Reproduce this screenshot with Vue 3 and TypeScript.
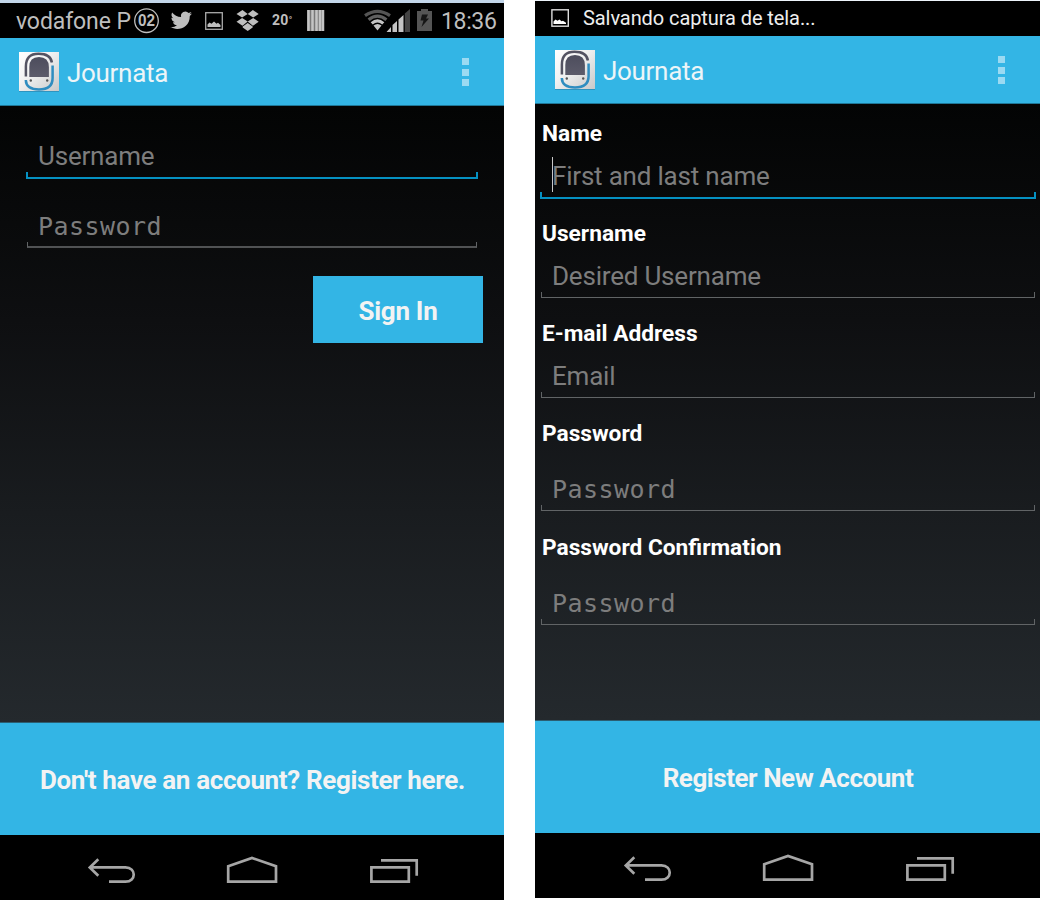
<script setup lang="ts">
interface Field {
  label?: string
  hint: string
  mono?: boolean
  focused?: boolean
  caret?: boolean
  cls: string
}

interface Screen {
  id: 'signin' | 'register'
  fields: Field[]
  action: string
}

const screens: Screen[] = [
  {
    id: 'signin',
    fields: [
      { hint: 'Username', focused: true, cls: 'h-user' },
      { hint: 'Password', mono: true, cls: 'h-pass' },
    ],
    action: "Don't have an account? Register here.",
  },
  {
    id: 'register',
    fields: [
      { label: 'Name', hint: 'First and last name', focused: true, caret: true, cls: 'h-name' },
      { label: 'Username', hint: 'Desired Username', cls: 'h-desired' },
      { label: 'E-mail Address', hint: 'Email', cls: 'h-email' },
      { label: 'Password', hint: 'Password', mono: true, cls: 'spaced' },
      { label: 'Password Confirmation', hint: 'Password', mono: true, cls: 'spaced' },
    ],
    action: 'Register New Account',
  },
]
</script>

<template>
  <main class="stage">
    <section v-for="s in screens" :key="s.id" class="phone" :class="s.id">
      <header v-if="s.id === 'signin'" class="status">
        <span class="carrier">vodafone P</span>
        <svg class="badge" width="26" height="35" viewBox="133 3 26 35">
          <circle cx="146.5" cy="20.7" r="11.8" fill="none" stroke="#bebebe" stroke-width="1.3" />
          <text x="146.5" y="26.4" text-anchor="middle" textLength="17" lengthAdjust="spacingAndGlyphs" class="badge-text">02</text>
        </svg>
        <svg class="bird" width="24" height="35" viewBox="169 3 24 35">
          <path fill="#bebebe" d="M192 13.6c-.8.4-1.600.6-2.500.7.9-.5 1.500-1.300 1.900-2.300-.9.5-1.800.8-2.800 1a4.400 4.400 0 0 0-7.500 4c-3.700-.2-6.900-1.900-9-4.600-1.200 2.100-.6 4.600 1.300 5.900-.7 0-1.400-.2-2-.5 0 2.200 1.500 4 3.500 4.400-.6.2-1.300.2-2 .1.600 1.700 2.200 3 4.100 3-1.900 1.400-4.100 2-6.500 1.800 6.800 4.200 19.500 1.200 19.300-11.200.9-.6 1.600-1.400 2.200-2.300z" />
        </svg>
        <svg class="photo" width="18" height="35" viewBox="205 3 18 35">
          <rect x="205.700" y="12.700" width="16.600" height="16.600" fill="none" stroke="#aaa" stroke-width="1.300" />
          <path d="M207.500 27v-2.500l2-2 2 1.200 2.500-2.200 2.500 2.200 1.500-1 2.500 2.300v2z" fill="#bebebe" />
        </svg>
        <svg class="boxes" width="24" height="35" viewBox="236 3 24 35">
          <path fill="#bebebe" d="M242.500 10l5.200 4-5.600 3.600-5.600-3.600zM252.900 10l5.800 4-5.500 3.600-5.500-3.600zM242.100 18l5.600 3.600-5.200 4.200-6-4zM253.200 18l5.500 3.800-5.800 4-5.200-4.200zM247.700 23l5 3.600v.9l-5 3.500-5-3.500v-.9z" />
        </svg>
        <span class="temp">20<i>°</i></span>
        <svg class="barcode" width="18" height="35" viewBox="307 3 18 35">
          <rect x="307" y="10" width="17" height="21" fill="#777" />
          <path d="M308.500 10v21M312.500 10v21M316.500 10v21M320 10v21M323 10v21" stroke="#c4c4c4" stroke-width="2.500" />
        </svg>
        <svg class="radio" width="70" height="35" viewBox="363 3 70 35">
          <g fill="none" stroke-width="3.200">
            <path d="M365 15.600Q377.500 7 390 15.600" stroke="#555" />
            <path d="M368.600 19.800Q377.500 12.500 386.400 19.800" stroke="#606060" />
            <path d="M371.700 23.400Q377.500 18.500 383.300 23.400" stroke="#c4c4c4" />
          </g>
          <path d="M373.500 25.600Q377.500 22.500 381.500 25.600L377.500 30.400z" fill="#c4c4c4" />
          <path d="M386.500 32l4.500-5v5zM392.500 32v-7l4.500-4v11zM398.500 32V19.500l5-4.500v17z" fill="#c4c4c4" />
          <path d="M404.800 32V13.500l5.200-4.500v23z" fill="#444" />
          <path d="M417 11h4V9h7v2h4v20h-15z" fill="#555" />
          <path d="M422 14.500h6l-2 4h3l-7.500 8.500 2-6.500h-3z" fill="#161616" />
        </svg>
        <span class="clock">18:36</span>
      </header>
      <header v-else class="status">
        <svg class="photo" width="18" height="35" viewBox="551 1 18 35">
          <rect x="551.900" y="9.800" width="16.400" height="16.400" fill="none" stroke="#ddd" stroke-width="1.400" />
          <path d="M553.500 24v-2.500l2-2 2 1.200 2-1.200 2 1.700 1.500-.5 3 2v1.300z" fill="#fff" />
        </svg>
        <span class="ticker">Salvando captura de tela...</span>
      </header>

      <div class="bar">
        <svg class="logo" width="42" height="42" viewBox="0 0 42 42">
          <defs>
            <linearGradient :id="'tile-' + s.id" x1="0" y1="0" x2="1" y2="1">
              <stop offset="0" stop-color="#fff" />
              <stop offset=".4" stop-color="#f3f3f3" />
              <stop offset="1" stop-color="#c9c9c9" />
            </linearGradient>
            <linearGradient :id="'cab-' + s.id" x1="0" y1="0" x2="0" y2="1">
              <stop offset="0" stop-color="#4d4d5d" />
              <stop offset="1" stop-color="#5c5b6a" />
            </linearGradient>
          </defs>
          <rect x="1" y="1.500" width="40" height="39.500" fill="#2b7fa5" opacity=".6" />
          <rect x="1" y="1" width="40" height="39" :fill="`url(#tile-${s.id})`" />
          <path d="M11.300 26V16Q11.300 6 21 6T30.900 16V26z" :fill="`url(#cab-${s.id})`" />
          <path d="M7.900 25.500V15.500C7.900 7 12 2.800 20.500 2.800C28.500 2.800 33 5.500 33.900 11.500" fill="none" stroke="#545362" stroke-width="2.500" />
          <path d="M34.600 14.500V27C34.600 35 30 38.500 21 38.500C12 38.500 8 35 7.800 29" fill="none" stroke="#2f8dc0" stroke-width="2.500" />
          <circle cx="12.800" cy="29.500" r="1.200" fill="#555" />
          <circle cx="29.200" cy="29.500" r="1.200" fill="#555" />
        </svg>
        <h1 class="title">Journata</h1>
        <div class="overflow"><b></b><b></b><b></b></div>
      </div>

      <form class="content" @submit.prevent>
        <div v-for="(f, i) in s.fields" :key="i" class="field" :class="[f.cls, { focused: f.focused }]">
          <label v-if="f.label" class="label">{{ f.label }}</label>
          <div class="hint" :class="{ mono: f.mono }">
            <i v-if="f.caret" class="caret"></i><span>{{ f.hint }}</span>
          </div>
          <div class="bracket"></div>
        </div>
        <button v-if="s.id === 'signin'" class="submit" type="button">Sign In</button>
      </form>

      <button class="action" type="button">{{ s.action }}</button>

      <nav class="nav">
        <svg width="504" height="65" viewBox="0 835 504 65" fill="none" stroke="#a6a6a6" stroke-width="2.700">
          <path d="M98.300 859.300L89.800 867.400L98.300 875.800M89.500 867.400H125.500C136.500 867.400 136.500 881.700 125.500 881.700H109" />
          <path d="M228.200 866.200L252 858L276 866.200V881.600H228.200z" />
          <path d="M371.400 867.300H408.800V881.600H371.400zM381 860.400H416.700V875.800" />
        </svg>
      </nav>
    </section>
  </main>
</template>

<style>
html,
body {
  margin: 0;
  background: #fff;
}
</style>

<style scoped>
.stage {
  width: 1040px;
  height: 900px;
  display: flex;
  align-items: flex-start;
  gap: 31px;
  overflow: hidden;
  background: #fff;
  font-family: Roboto, "Open Sans", sans-serif;
}
.phone {
  box-sizing: border-box;
  display: flex;
  flex-direction: column;
  background: #000;
}
.signin {
  width: 504px;
  height: 900px;
  border-top: 3px solid #c3d6ea;
}
.register {
  width: 505px;
  height: 898px;
  border-top: 1px solid #edf4fa;
}
.status {
  height: 35px;
  flex: none;
  display: flex;
  align-items: center;
  background: #000;
  color: #bebebe;
  white-space: nowrap;
}
.status svg {
  flex: none;
}
.carrier {
  width: 117px;
  padding: 1px 0 0 16px;
  font-size: 23px;
  line-height: 35px;
  letter-spacing: -0.1px;
}
.badge-text {
  font: bold 16px "Liberation Sans", sans-serif;
  fill: #bebebe;
}
.bird {
  margin-left: 10px;
}
.signin .photo {
  margin-left: 12px;
}
.boxes {
  margin-left: 13px;
}
.temp {
  width: 35px;
  padding: 2px 0 0 12px;
  flex: none;
  font: bold 14px/35px Roboto, sans-serif;
  letter-spacing: 0.3px;
}
.temp i {
  font-size: 9px;
  font-style: normal;
  position: relative;
  top: -2px;
}
.radio {
  margin-left: 38px;
}
.clock {
  margin: 1px 0 0 8px;
  font-size: 23px;
  line-height: 35px;
  letter-spacing: -0.35px;
}
.register .photo {
  margin-left: 16px;
}
.ticker {
  margin-left: 14px;
  color: #eee;
  font-size: 20px;
  line-height: 35px;
  letter-spacing: -0.08px;
}
.bar {
  box-sizing: border-box;
  height: 68px;
  flex: none;
  display: flex;
  align-items: flex-start;
  padding: 13px 35px 0 18px;
  background: #33b5e5;
  border-bottom: 1px solid #1f7797;
}
.register .bar {
  padding-left: 19px;
}
.title {
  margin: 7px 0 0 7px;
  color: #edf5f8;
  font-size: 26px;
  line-height: 31px;
  font-weight: 400;
  letter-spacing: -0.3px;
}
.overflow {
  margin: 7px 0 0 auto;
  display: flex;
  flex-direction: column;
  gap: 3.500px;
}
.overflow b {
  width: 7px;
  height: 7px;
  background: #9bdaf2;
}
.content {
  flex: 1;
  display: flex;
  flex-direction: column;
  background: linear-gradient(#030404, #0e0f11 35%, #191c1f 66%, #24292d);
}
.signin .content {
  padding: 36px 26px 0;
}
.register .content {
  padding: 15px 4px 0 5px;
}
.hint {
  position: relative;
  height: 30px;
  line-height: 30px;
  padding-left: 12px;
  color: #7d7d7d;
  font-size: 26px;
  letter-spacing: -0.2px;
  white-space: nowrap;
}
.signin .hint {
  line-height: 29px;
}
.register .hint {
  padding: 0 0 1px 12px;
}
.hint.mono {
  font-family: "DejaVu Sans Mono", monospace;
  font-size: 25px;
  line-height: 32px;
  letter-spacing: 0.45px;
}
.bracket {
  box-sizing: border-box;
  height: 6px;
  margin: 0 1px;
  border: 1px solid #616466;
  border-top: 0;
}
.focused .bracket {
  height: 7px;
  margin: 0;
  border: 2px solid #0591c2;
  border-top: 0;
}
.signin .h-pass {
  margin-top: 32px;
}
.signin .h-pass .bracket {
  margin-top: 1px;
  border-bottom-width: 2px;
  border-bottom-color: #505254;
}
.label {
  display: block;
  padding-left: 2px;
  height: 30px;
  line-height: 30px;
  margin-bottom: 12px;
  color: #fff;
  font-size: 22.700px;
  font-weight: 700;
}
.register .field {
  margin-bottom: 21px;
}
.register .field.focused {
  margin-bottom: 20px;
}
.register .spaced {
  margin-bottom: 22px;
}
.register .spaced .label {
  margin-bottom: 25px;
}
.caret {
  position: absolute;
  left: 12px;
  top: -4px;
  width: 1px;
  height: 35px;
  background: #c8c8c8;
}
.submit {
  align-self: flex-end;
  width: 170px;
  height: 67px;
  margin: 28px -5px 0 0;
  padding: 2px 0 0;
  border: 0;
  background: #33b5e5;
  color: #f3f3f3;
  font: 700 26px Roboto, sans-serif;
  letter-spacing: -0.3px;
}
.action {
  box-sizing: border-box;
  height: 113px;
  flex: none;
  border: 0;
  border-top: 1px solid #2b5e72;
  padding: 2px 0 0 1px;
  background: #33b5e5;
  color: #f3f3f3;
  font: 700 26px Roboto, sans-serif;
  letter-spacing: -0.36px;
  white-space: nowrap;
}
.register .action {
  letter-spacing: -0.45px;
}
.nav {
  height: 65px;
  flex: none;
  background: #000;
}
.register .nav {
  padding-left: 1px;
}
.nav svg {
  display: block;
}
</style>
